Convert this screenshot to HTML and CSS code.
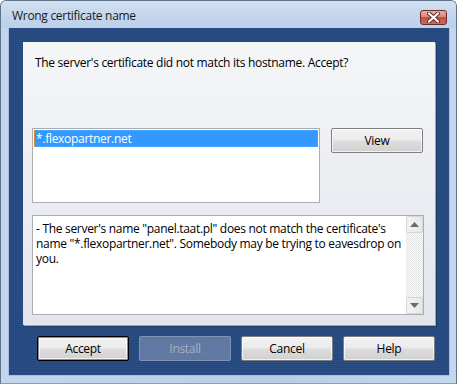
FILE: index.html
```html
<!DOCTYPE html>
<html>
<head>
<meta charset="utf-8">
<link rel="stylesheet" href="styles.css">
</head>
<body>
<div class="window">
  <div class="titlebar">
    <span class="title">Wrong certificate name</span>
    <div class="close">
      <svg width="15" height="11" viewBox="0 0 15 11"><path d="M3 1.5 L12 9.5 M12 1.5 L3 9.5" stroke="#5a2a28" stroke-width="4" stroke-linecap="round"/><path d="M3 1.5 L12 9.5 M12 1.5 L3 9.5" stroke="#fff" stroke-width="2.2" stroke-linecap="round"/></svg>
    </div>
  </div>
  <div class="client">
    <div class="panel">
      <p class="message">The server's certificate did not match its hostname. Accept?</p>
      <div class="listrow">
        <div class="listbox">
          <div class="item selected">*.flexopartner.net</div>
        </div>
        <button class="btn view">View</button>
      </div>
      <div class="details">
        <div class="details-text">- The server's name "panel.taat.pl" does not match the certificate's name "*.flexopartner.net". Somebody may be trying to eavesdrop on you.</div>
        <div class="scrollbar">
          <div class="sb-btn"><svg width="9" height="5" viewBox="0 0 9 5"><path d="M0 5 L4.5 0 L9 5 Z" fill="#6b6b6b"/></svg></div>
          <div class="sb-track"></div>
          <div class="sb-btn"><svg width="9" height="5" viewBox="0 0 9 5"><path d="M0 0 L9 0 L4.5 5 Z" fill="#6b6b6b"/></svg></div>
        </div>
      </div>
    </div>
    <div class="buttons">
      <button class="btn default">Accept</button>
      <button class="btn disabled">Install</button>
      <button class="btn">Cancel</button>
      <button class="btn">Help</button>
    </div>
  </div>
</div>
</body>
</html>
```
FILE: styles.css
```css
html, body {
  margin: 0;
  padding: 0;
  width: 457px;
  height: 384px;
  overflow: hidden;
  background: #fff;
}
.window {
  box-sizing: border-box;
  width: 457px;
  height: 384px;
  border: 1px solid #5f7389;
  border-bottom: 1px solid #3fbfd6;
  border-radius: 6px 6px 0 0;
  background: linear-gradient(90deg, #c3d6ec 0%, #b9cde6 60%, #c4d7ed 100%);
  display: flex;
  flex-direction: column;
  font-family: "Open Sans", "Noto Sans", sans-serif;
  font-size: 12px;
  letter-spacing: -0.3px;
  color: #000;
}
.titlebar {
  height: 27px;
  display: flex;
  align-items: flex-start;
  justify-content: space-between;
  padding: 0 9px 0 11px;
  background: linear-gradient(180deg, #d2e0f1 0%, #c2d5ec 60%, #bcd0e9 100%);
  border-radius: 5px 5px 0 0;
}
.title {
  margin-top: 7px;
  line-height: 16px;
  color: #1a1a1a;
}
.close {
  margin-top: 9px;
  width: 27px;
  height: 15px;
  box-sizing: border-box;
  border: 1px solid #6b2b27;
  border-radius: 3px;
  background: linear-gradient(180deg, #e9aca0 0%, #d88a7e 45%, #c4503f 50%, #cf6a58 100%);
  display: flex;
  align-items: center;
  justify-content: center;
}
.client {
  flex: 1;
  margin: 0 6px 7px 7px;
  border: 1px solid #a9c0dc;
  border-top: none;
  background: repeating-linear-gradient(180deg, #2b4f85 0px, #2b4f85 1px, #26477a 1px, #26477a 2px);
  padding: 14px 14px 0 14px;
  display: flex;
  flex-direction: column;
}
.panel {
  height: 283px;
  box-sizing: border-box;
  background: linear-gradient(180deg, #f5f6f8 0%, #edeff3 40%, #e2e6ec 100%);
  box-shadow: 1px 1px 0 #9aa8bd, 2px 2px 0 rgba(20,40,80,0.5);
  padding: 13px 10px 0 9px;
}
.message {
  margin: 0 0 0 3px;
  line-height: 16px;
}
.listrow {
  display: flex;
  align-items: flex-start;
  gap: 11px;
  margin-top: 57px;
}
.listbox {
  box-sizing: border-box;
  width: 288px;
  height: 75px;
  border: 1px solid #abadb3;
  background: #fff;
  padding: 1px;
}
.item {
  height: 17px;
  line-height: 16px;
  padding-left: 1px;
  box-sizing: border-box;
}
.item.selected {
  background: #3399ff;
  color: #fff;
  border: 1px dotted #f0902a;
}
.btn {
  box-sizing: border-box;
  width: 92px;
  height: 25px;
  font-family: "Open Sans", "Noto Sans", sans-serif;
  font-size: 12px;
  letter-spacing: -0.3px;
  color: #000;
  border: 1px solid #7e7f80;
  border-radius: 2px;
  background: linear-gradient(180deg, #f2f2f2 0%, #ebebeb 48%, #dddddd 52%, #d0d0d0 100%);
  box-shadow: inset 0 0 0 1px rgba(255,255,255,0.7);
  padding: 0;
  margin: 0;
}
.details {
  margin-top: 12px;
  box-sizing: border-box;
  width: 392px;
  height: 100px;
  border: 1px solid #abadb3;
  background: #fff;
  display: flex;
}
.details-text {
  flex: 1;
  padding: 5px 4px 0 3px;
  line-height: 15px;
}
.scrollbar {
  width: 17px;
  display: flex;
  flex-direction: column;
}
.sb-btn {
  height: 17px;
  box-sizing: border-box;
  border: 1px solid #d6d6d6;
  border-radius: 1px;
  background: linear-gradient(90deg, #f3f3f3, #e8e8e8);
  display: flex;
  align-items: center;
  justify-content: center;
}
.sb-track {
  flex: 1;
  background: repeating-conic-gradient(#e3e3e3 0 25%, #fbfbfb 0 50%) 0 0 / 2px 2px;
}
.buttons {
  display: flex;
  gap: 10px;
  margin-top: 11px;
  padding-left: 14px;
}
.btn.default {
  border: 1px solid #000;
  box-shadow: inset 0 0 0 1px #8a8a8a, inset 0 0 0 2px rgba(255,255,255,0.7);
}
.btn.disabled {
  background: rgba(200, 210, 225, 0.35);
  border: 1px solid rgba(150,165,190,0.6);
  box-shadow: none;
  color: #a7b1c3;
}
```
